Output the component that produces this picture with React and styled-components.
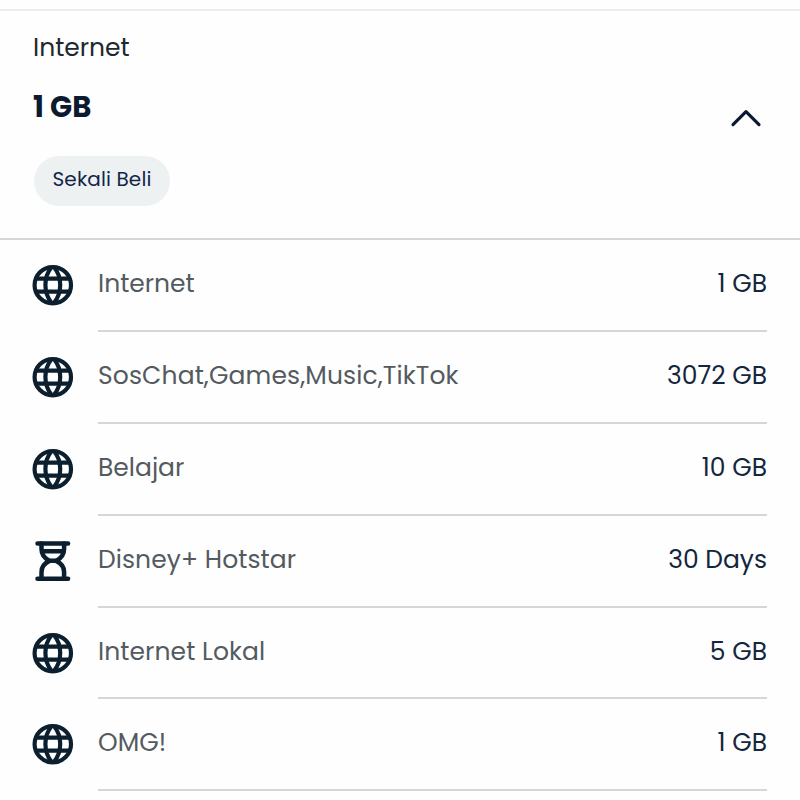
import React from "react";
import styled, { createGlobalStyle } from "styled-components";

const GlobalStyle = createGlobalStyle`
  body {
    margin: 0;
    background: #fefefe;
    font-family: Poppins, Inter, "Liberation Sans", sans-serif;
    overflow: hidden;
  }
`;

const Page = styled.main`
  box-sizing: border-box;
  width: 800px;
  height: 800px;
  padding-top: 9px;
  overflow: hidden;
`;

const Header = styled.header`
  box-sizing: border-box;
  display: flex;
  justify-content: space-between;
  height: 231px;
  padding: 21px 38px 0 33px;
  border-top: 2px solid #ececed;
  border-bottom: 2px solid #d3d7d9;
`;

const Text = styled.span`
  display: block;
  white-space: nowrap;
  font-weight: 400;
  font-size: ${props => props.$size || 25}px;
  line-height: 32px;
  letter-spacing: ${props => props.$spacing || 0}px;
`;

const Category = styled(Text)`
  color: #20272d;
`;

const Quota = styled(Text)`
  margin-top: 27px;
  color: #0b1a2e;
  font-weight: 700;
`;

const Chip = styled.div`
  box-sizing: border-box;
  width: 136px;
  height: 50px;
  margin: 33px 0 0 1px;
  padding: 7px 0 0 18.5px;
  border-radius: 25px;
  background: #eef1f2;
  color: #14254a;
`;

const Toggle = styled.button`
  align-self: flex-start;
  margin-top: 76px;
  padding: 0;
  border: 0;
  background: none;
  line-height: 0;
`;

const List = styled.ul`
  margin: 0;
  padding: 0 33px 0 32px;
  list-style: none;
`;

const Row = styled.li`
  display: flex;
  height: 91.9px;
`;

const IconBox = styled.div`
  width: 66px;
  padding-top: 24px;
  line-height: 0;
`;

const RowBody = styled.div`
  box-sizing: border-box;
  flex: 1;
  display: flex;
  justify-content: space-between;
  padding-top: 28px;
  border-bottom: 2px solid #d4d7d9;
`;

const Name = styled(Text)`
  color: #535a60;
`;

const Amount = styled(Text)`
  color: #14263d;
`;

const Globe = () => (
  <svg width="42" height="42" viewBox="0 0 42 42" fill="none" stroke="#0c1f2e" strokeWidth="4.2">
    <circle cx="20.8" cy="21.2" r="18.2" />
    <path d="M4 14.7H38M4 27.7H38" />
    <path d="M19.7 3C11.3 13 11.3 29 19.7 39M21.9 3C30.3 13 30.3 29 21.9 39" />
  </svg>
);

const Hourglass = () => (
  <svg
    width="42"
    height="42"
    viewBox="0 0 42 42"
    fill="none"
    stroke="#0c1f2e"
    strokeWidth="4.5"
    strokeLinecap="round"
  >
    <path d="M5.5 3.5H36.1M5.5 38.7H36.1M11 11.2H31" />
    <path d="M9.5 3.5V9C9.5 15 13 18.5 17.5 20.9C13 23 9.5 26.5 9.5 32V38.5" />
    <path d="M32.1 3.5V9C32.1 15 28.6 18.5 24.1 20.9C28.6 23 32.1 26.5 32.1 32V38.5" />
    <path d="M17.5 20.7H24.1" />
  </svg>
);

const items = [
  { name: "Internet", amount: "1 GB" },
  { name: "SosChat,Games,Music,TikTok", amount: "3072 GB", spacing: 0.12 },
  { name: "Belajar", amount: "10 GB" },
  { name: "Disney+ Hotstar", amount: "30 Days", spacing: 0.08, icon: Hourglass },
  { name: "Internet Lokal", amount: "5 GB", spacing: 0.08 },
  { name: "OMG!", amount: "1 GB" }
];

function App() {
  return (
    <Page>
      <GlobalStyle />
      <Header>
        <div>
          <Category>Internet</Category>
          <Quota $size={29}>1 GB</Quota>
          <Chip>
            <Text $size={20} $spacing={0.12}>
              Sekali Beli
            </Text>
          </Chip>
        </div>
        <Toggle aria-label="Collapse">
          <svg width="32" height="20" viewBox="0 0 32 20" fill="none" stroke="#0b1a33" strokeWidth="3.2">
            <path d="M3 16.6L16 3.6L29 16.6" strokeLinecap="round" strokeLinejoin="round" />
          </svg>
        </Toggle>
      </Header>
      <List>
        {items.map(({ name, amount, spacing, icon: Icon = Globe }) => (
          <Row key={name}>
            <IconBox>
              <Icon />
            </IconBox>
            <RowBody>
              <Name $spacing={spacing}>{name}</Name>
              <Amount>{amount}</Amount>
            </RowBody>
          </Row>
        ))}
      </List>
    </Page>
  );
}

export default App;
